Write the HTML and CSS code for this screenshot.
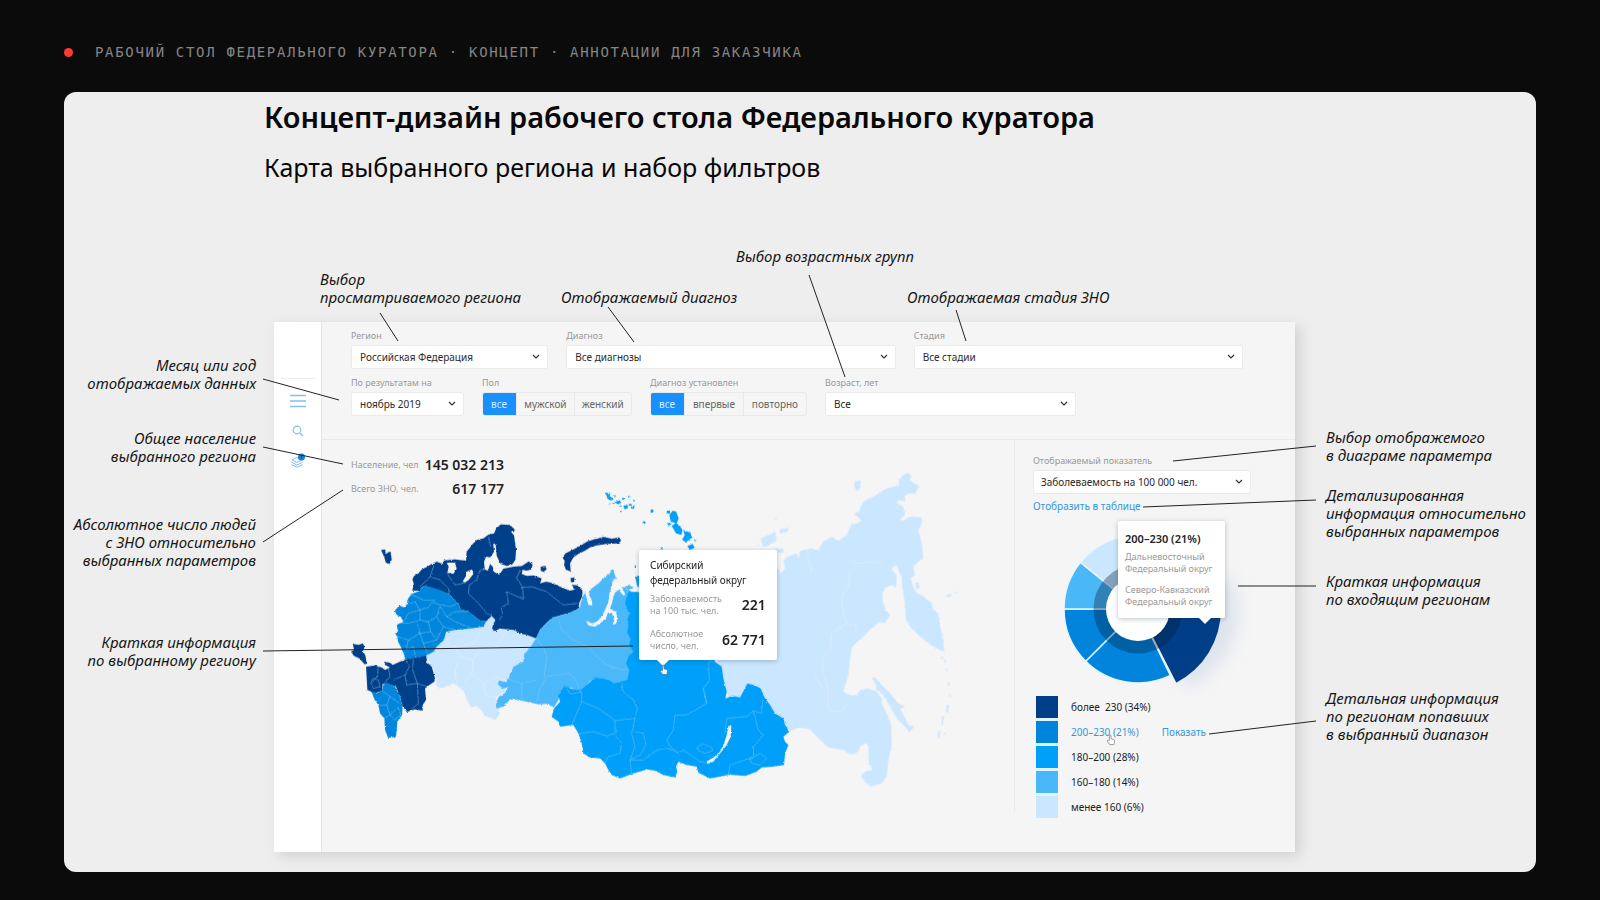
FILE: index.html
```html
<!DOCTYPE html>
<html lang="ru">
<head>
<meta charset="utf-8">
<title>Рабочий стол федерального куратора</title>
<link rel="stylesheet" href="styles.css">
</head>
<body>
<header class="topline"><span class="dot"></span><span>РАБОЧИЙ СТОЛ ФЕДЕРАЛЬНОГО КУРАТОРА · КОНЦЕПТ · АННОТАЦИИ ДЛЯ ЗАКАЗЧИКА</span></header>

<main class="slide">
  <div class="heading">
    <h1>Концепт-дизайн рабочего стола Федерального куратора</h1>
    <h2>Карта выбранного региона и набор фильтров</h2>
  </div>

  <div class="notes-top">
    <p class="note">Выбор<br>просматриваемого региона</p>
    <p class="note">Отображаемый диагноз</p>
    <p class="note raised">Выбор возрастных групп</p>
    <p class="note">Отображаемая стадия ЗНО</p>
  </div>

  <div class="stage">
    <div class="notes-left">
      <p class="note">Месяц или год<br>отображаемых данных</p>
      <p class="note">Общее население<br>выбранного региона</p>
      <p class="note">Абсолютное число людей<br>с ЗНО относительно<br>выбранных параметров</p>
      <p class="note">Краткая информация<br>по выбранному региону</p>
    </div>

    <section class="app">
      <nav class="rail">
        <button class="rail-btn" aria-label="Меню"><svg width="18" height="14" viewBox="0 0 18 14"><path d="M1 1.5H17M1 7H17M1 12.5H17" stroke-width="1.5"/></svg></button>
        <button class="rail-btn" aria-label="Поиск"><svg width="12" height="12" viewBox="0 0 12 12"><circle cx="5" cy="5" r="3.8" stroke-width="1.2"/><path d="M7.9 7.9L11 11" stroke-width="1.4"/></svg></button>
        <button class="rail-btn" aria-label="Слои"><svg width="16" height="16" viewBox="0 0 16 16"><path d="M2 7L7 4.500L12 7L7 9.500Z M1.500 9.300L7 12L12.500 9.300 M1.500 11.600L7 14.300L12.500 11.600"/><circle class="badge" cx="11.500" cy="4" r="3.500"/><path class="badge-mark" d="M11.500 2.500V5.500"/></svg></button>
      </nav>

      <div class="work">
        <form class="filters">
          <div class="row">
            <label class="field grow-s"><span>Регион</span><select><option>Российская Федерация</option></select></label>
            <label class="field grow-l"><span>Диагноз</span><select><option>Все диагнозы</option></select></label>
            <label class="field grow-l"><span>Стадия</span><select><option>Все стадии</option></select></label>
          </div>
          <div class="row">
            <label class="field month"><span>По результатам на</span><select><option>ноябрь 2019</option></select></label>
            <div class="field" role="group" aria-label="Пол"><span>Пол</span>
              <div class="seg sex"><button type="button" class="on">все</button><button type="button">мужской</button><button type="button">женский</button></div></div>
            <div class="field" role="group" aria-label="Диагноз установлен"><span>Диагноз установлен</span>
              <div class="seg when"><button type="button" class="on">все</button><button type="button">впервые</button><button type="button">повторно</button></div></div>
            <label class="field age"><span>Возраст, лет</span><select><option>Все</option></select></label>
          </div>
        </form>

        <div class="content">
          <div class="map-area">
            <dl class="totals">
              <dt>Население, чел</dt><dd>145 032 213</dd>
              <dt>Всего ЗНО, чел.</dt><dd>617 177</dd>
            </dl>

            <svg class="map" viewBox="0 0 1980 1000" role="img" aria-label="Карта России по федеральным округам">
              <defs>
                <filter id="coast" x="-2%" y="-2%" width="104%" height="104%">
                  <feTurbulence type="fractalNoise" baseFrequency="0.12" numOctaves="2" seed="4"/>
                  <feDisplacementMap in="SourceGraphic" scale="7" xChannelSelector="R" yChannelSelector="G"/>
                </filter>
              </defs>
              <g filter="url(#coast)">
                <g class="c1" transform="translate(1200 -30)">
                  <path d="M100 350L115 322L122 342L135 325L130 303L142 290L170 280L175 293L180 273L215 265L235 271L250 245L275 230L295 243L320 225L335 190L348 192L365 182L342 162L355 155L370 125L400 110L440 85L470 78L478 75L476 60L490 45L505 38L514 50L508 60L530 75L538 80L525 100L500 102L494 110L496 125L478 120L470 128L490 140L494 165L480 178L490 182L508 170L545 172L547 185L535 210L545 250L550 295L535 305L520 320L525 345L512 355L520 380L530 400L545 405L575 430L580 450L595 460L600 500L608 530L613 577L580 560L540 530L510 500L498 480L495 430L487 385L485 350L472 322L460 318L456 330L470 345L468 382L455 375L435 385L427 400L430 430L440 455L450 465L435 490L420 485L395 505L370 530L335 560L330 600L325 645L310 695L330 705L350 708L360 690L385 685L410 695L425 715L425 730L440 760L453 790L455 860L445 900L440 950L425 970L390 980L362 950L375 935L395 930L385 900L385 860L378 848L360 860L355 875L335 885L310 870L265 862L240 840L210 808L180 803L150 812L130 800L20 780L-50 690L-70 590L-70 400Z"/>
                  <path d="M393 650L405 652L425 675L455 705L475 730L497 740L480 745L490 765L505 795L522 800L508 818L495 800L470 775L450 740L430 705L410 690L408 675Z"/>
                  <path d="M345 62L362 62L360 85L350 95L342 78ZM62 235L85 225L105 215L110 240L80 260L68 258ZM118 208L148 203L142 215L120 220ZM105 265L132 265L130 278L110 278ZM526 370L536 368L538 385L528 388ZM615 408L632 402L636 408L622 412ZM640 398L650 394L648 400ZM105 175h5v4h-5ZM602 592L610 588L608 600ZM612 598L618 600L616 614ZM618 626h5v7h-5ZM624 668h5v8h-5ZM626 702h6v8h-6ZM620 735L627 733L624 758L618 756ZM606 770L612 766L608 795L604 796ZM594 815L600 812L598 832L593 834ZM612 818h4v6h-4ZM50 246L58 256L56 260Z"/>
                  <path class="faint" d="M330 300L350 310L410 305L430 318M330 330L325 380L305 410L308 450L320 490L345 495L350 520M320 490L275 520L270 570L245 600L250 640L265 690L265 750L305 755L320 730M200 270L215 340M220 640L250 690"/>
                </g>
                <path class="c1" d="M318 486L345 478L400 474L430 470L436 450L455 435L468 442L466 462L458 476L462 484L500 478L530 482L545 492L588 505L575 525L550 560L548 580L520 590L505 620L500 635L480 632L474 645L490 655L500 650L495 665L470 680L465 700L475 715L478 735L468 750L450 742L435 740L425 722L408 708L392 712L380 690L372 665L355 650L340 640L315 650L298 655L287 645L290 630L280 600L270 578L256 556L280 546L290 530L312 510Z"/>
                <path class="faint" d="M312 510L345 530L360 560L345 600L350 640M345 530L400 520L430 475M360 560L400 570L420 540L470 530L500 480M400 570L395 610L430 640L440 680L470 680M430 640L470 620L500 635M395 610L370 640"/>
                <path class="c5" d="M123 240L135 238L139 252L146 246L152 246L155 270L147 283L137 277L133 262ZM217 362L221 340L217 328L222 318L235 310L245 298L262 290L272 283L290 275L308 282L312 271L345 268L378 272L380 245L398 222L410 210L430 205L445 194L462 190L468 176L482 163L510 165L524 178L522 186L512 184L522 196L528 240L526 270L516 284L500 288L482 282L470 258L467 225L460 218L460 225L462 245L450 262L438 260L432 275L434 298L444 302L450 282L458 290L462 306L478 314L490 296L520 290L546 288L566 274L578 284L574 298L560 302L548 300L545 312L560 318L580 316L605 325L600 340L618 335L640 340L660 350L690 362L705 358L695 344L712 346L728 362L726 380L718 398L715 416L690 428L655 438L636 444L618 460L600 480L588 505L560 495L545 492L520 480L480 476L462 484L456 474L466 450L455 438L438 454L420 452L385 425L362 418L355 400L340 386L325 372L300 362L270 352L250 347L240 362Z"/>
                <path class="c5" d="M668 262L676 250L700 238L720 228L742 214L762 208L790 201L815 206L838 202L843 212L836 220L800 222L770 226L750 232L735 242L715 252L700 262L690 280L692 304L678 300L672 285L674 275ZM602 290L616 288L620 298L610 306L602 302ZM692 324L704 322L702 338L692 336ZM38 520L55 525L68 520L74 530L68 542L76 556L80 580L74 583L58 565L42 558L33 545L42 540Z"/>
                <path class="hole" d="M320 278L345 278L350 296L340 312L322 308L326 290ZM378 306L396 298L400 312L386 330L374 338L368 334L378 318Z"/>
                <path class="c4" d="M164 422L178 406L192 412L200 404L204 386L215 372L240 362L250 347L275 352L305 362L325 372L342 388L355 400L362 418L385 424L420 452L438 454L430 470L395 475L345 480L318 486L312 510L290 530L280 546L258 556L245 562L215 564L195 568L192 552L182 530L174 515L172 500L165 490L174 484L170 465L178 460L190 455L182 440L170 435Z"/>
                <path class="c5" d="M78 590L105 586L125 592L135 600L150 592L135 585L132 576L150 578L158 585L178 576L195 568L215 564L245 560L258 556L262 578L275 590L285 625L283 635L268 645L255 655L258 690L248 705L248 722L225 718L200 726L188 708L180 680L168 650L145 642L128 642L126 662L105 670L82 660Z"/>
                <path class="c4" d="M94 664L110 670L126 662L130 645L140 638L165 650L178 675L188 710L186 735L172 755L168 800L144 804L135 780L133 745L120 730L115 705L104 690Z"/>
                <path class="c2" d="M588 505L600 480L636 444L690 428L718 414L726 385L735 365L740 385L745 405L757 406L755 390L745 370L755 355L775 340L795 320L812 308L810 300L820 298L822 308L830 330L845 340L850 352L866 345L880 352L900 400L900 640L862 634L840 636L820 644L805 628L765 624L748 635L725 665L710 662L695 654L672 655L655 690L642 712L620 702L595 703L560 695L530 690L510 688L490 710L470 716L467 700L475 682L495 668L505 652L488 655L474 645L476 632L500 636L508 618L520 590L550 575L552 555L575 525Z"/>
                <g transform="translate(600 0)">
                  <path class="c3" d="M255 400L260 380L272 355L297 366L300 300L420 300L520 560L525 575L545 590L550 625L560 665L556 685L578 678L600 682L612 660L622 640L645 646L662 655L672 680L690 705L705 730L730 745L735 765L748 785L730 800L735 815L745 825L735 850L732 885L700 890L665 892L650 905L615 918L570 914L540 920L510 925L475 908L470 890L440 885L415 875L408 890L412 905L405 922L370 915L345 902L320 898L275 912L240 925L215 915L205 900L195 880L180 865L150 862L130 850L125 820L115 790L100 765L60 770L55 755L35 740L42 715L60 695L55 675L75 645L90 655L110 660L125 658L145 640L165 622L205 628L220 640L262 630L268 600L258 580L265 560L280 545L268 525L272 505L262 490L265 465L262 450L268 430Z"/>
                  <path class="c3" d="M285 320L300 316V355L292 350ZM388 135L398 122L408 124L416 145L410 160L392 155ZM395 168L408 158L428 178L424 195L408 190ZM430 180L450 188L456 202L438 218L426 208L434 196ZM442 228L458 222L464 234L448 240ZM380 160L392 158L388 168ZM380 122h10v8h-10ZM332 118h8v10h-8ZM308 154h8v7h-8ZM362 232h6v6h-6ZM462 208L470 212L464 214ZM284 286h4v6h-4Z"/>
                  <path class="c3" d="M195 68L212 70L208 78L218 84L214 92L202 86L200 78ZM222 76h5v5h-5ZM226 96L238 90L244 98L232 104ZM246 84h6v5h-6ZM264 78h4v4h-4ZM250 108L262 104L264 114L254 118ZM266 102h9v5h-9ZM272 110L284 106L282 116L274 116ZM240 122h5v4h-5ZM218 98h6v4h-6ZM208 100h4v4h-4ZM280 90h4v4h-4ZM236 110L246 106L242 112Z"/>
                  <path class="hole" d="M565 768L574 768L572 800L560 825L540 850L520 875L502 882L500 874L520 862L540 845L552 820L560 795Z"/>
                  <path class="border" d="M75 645L90 672L125 665L125 695L95 765M125 695L175 715L210 740L225 752L285 745L292 715L280 690L250 665L245 640M118 790L160 785L200 798L225 790L225 752M225 795L245 820L240 850L205 860L195 880M285 745L275 790L285 830L270 870L275 912M285 785L310 790L318 825L300 855L270 870L310 870L350 840L380 835L415 848L430 840L480 875L500 878M525 575L505 575L508 630L490 655L500 700L440 735L405 735L400 780L380 810L390 830L415 848M500 700L490 655M555 790L560 745L620 740L640 722L665 730L668 690M640 722L655 780L670 795L640 830L640 860L600 875L570 885L565 914M470 830L490 822L515 832L518 842L495 850L475 842ZM630 868L660 850L680 865L660 885L635 880Z"/>
                </g>
                <path class="hole" d="M822 325L842 330L845 318L850 345L862 360L895 350L900 366L875 366L855 352L845 350L856 374L850 376L838 362L828 362L820 380L816 398L810 416L828 425L832 445L828 462L818 464L822 445L815 428L803 428L798 445L780 460L765 470L745 466L738 452L755 460L770 455L785 440L795 420L805 395L808 370L815 345Z"/>
                <path class="border" d="M446 200L452 230M282 285L270 320L300 330L325 355L328 372M270 320L240 350M320 308L345 345L378 338M435 298L420 300L410 330L388 345L385 370L415 400L440 430L456 438M478 450L488 435L484 412L505 400L500 365L550 388L548 352L530 325L540 300M548 352L575 350L620 365L670 405L715 400M585 503L610 530L620 560L612 625M590 695L600 655L622 618L690 610L710 635L722 665M655 450L665 480L700 510L745 530L770 560L810 590L862 600M500 625L545 640L590 630M545 640L545 690M200 404L225 395L240 420L205 430L190 455M240 420L265 412L275 398L305 405L330 410L355 400M240 420L240 450L205 460L178 460M240 450L265 455L290 440L300 408M265 455L272 485L240 490L232 460M240 490L205 510L172 500M205 510L198 540L220 530L228 565M272 485L290 510L250 520L240 490M250 520L262 550M290 440L310 470L345 480M310 470L290 510M300 408L320 440L345 425L385 424M320 440L345 455L395 475M210 372L250 390L285 392M115 590L112 620L98 635M145 595L150 620L132 640M195 568L208 590L195 615L160 630M220 565L218 600L232 640L235 700L215 718M195 615L200 645L232 640L262 650M100 625L115 630L120 650L100 655L92 640ZM126 662L150 680L140 705L118 705M150 680L178 700M140 705L150 735L133 745M150 735L175 712L182 735L165 750L150 735"/>
              </g>
            </svg>

            <aside class="tip region-tip">
              <h3>Сибирский<br>федеральный округ</h3>
              <dl>
                <dt>Заболеваемость<br>на 100 тыс. чел.</dt><dd>221</dd>
                <dt>Абсолютное<br>число, чел.</dt><dd>62 771</dd>
              </dl>
              <svg class="hand" viewBox="0 0 12 14"><path d="M4 8V2Q4 1 5 1T6 2V5.500L9.500 6.500Q10.500 7 10.300 8.500L9.500 12.500H4.500L1.500 8.500Q1.500 7 3 7.500Z"/></svg>
            </aside>
          </div>

          <aside class="panel">
            <label class="field metric"><span>Отображаемый показатель</span><select><option>Заболеваемость на 100 000 чел.</option></select></label>
            <a class="table-link" href="#table">Отобразить в таблице</a>
            <svg class="donut" viewBox="0 0 230 180" role="img" aria-label="Распределение регионов по диапазонам">
              <defs><filter id="soft" x="-50%" y="-50%" width="200%" height="200%"><feGaussianBlur stdDeviation="9"/></filter></defs>
              <path d="M117 101L153 172A84 84 0 0 0 197 58Z" fill="#7f9bcb" opacity="0.2" filter="url(#soft)"/>
              <g stroke="#e9f6ff" stroke-width="1.500">
                <path fill="#0084dc" d="M105 93L137.400 159.500A74 74 0 0 1 52.700 145.300Z"/>
                <path fill="#0084dc" d="M105 93L52.700 145.300A74 74 0 0 1 31 93Z"/>
                <path fill="#4ab7f8" d="M105 93L31 93A74 74 0 0 1 47.500 46.400Z"/>
                <path fill="#cbe6ff" d="M105 93L47.500 46.400A74 74 0 0 1 105 19Z"/>
              </g>
              <path fill="#003e88" d="M105 93L142.700 167A83 83 0 0 0 188 93L170 40Z"/>
              <path stroke="#e9f6ff" stroke-width="1.500" d="M105 93L142.700 167"/>
              <circle cx="105" cy="93" r="38" fill="none" stroke="#001d38" stroke-opacity="0.350" stroke-width="13"/>
              <circle cx="105" cy="93" r="32" fill="#fff"/>
            </svg>
            <ul class="legend">
              <li><i class="k5"></i>более&nbsp; 230 (34%)</li>
              <li class="active"><i class="k4"></i><a href="#range">200–230 (21%)</a><a class="show" href="#show">Показать</a>
                <svg class="hand" viewBox="0 0 12 14"><path d="M4 8V2Q4 1 5 1T6 2V5.500L9.500 6.500Q10.500 7 10.300 8.500L9.500 12.500H4.500L1.500 8.500Q1.500 7 3 7.500Z"/></svg></li>
              <li><i class="k3"></i>180–200 (28%)</li>
              <li><i class="k2"></i>160–180 (14%)</li>
              <li><i class="k1"></i>менее 160 (6%)</li>
            </ul>
            <div class="tip range-tip">
              <h3>200–230 (21%)</h3>
              <p>Дальневосточный<br>Федеральный округ</p>
              <p>Северо-Кавказский<br>Федеральный округ</p>
            </div>
          </aside>
        </div>
      </div>
    </section>

    <div class="notes-right">
      <p class="note">Выбор отображемого<br>в диаграме параметра</p>
      <p class="note">Детализированная<br>информация относительно<br>выбранных параметров</p>
      <p class="note">Краткая информация<br>по входящим регионам</p>
      <p class="note">Детальная информация<br>по регионам попавших<br>в выбранный диапазон</p>
    </div>
  </div>

  <svg class="leaders" viewBox="0 0 1472 780" preserveAspectRatio="none" aria-hidden="true">
    <path d="M316 221L334 249M544 215L570 250M745 183L781 285M892 218L902 249M199 287L275 308M199 355L279 372M199 450L279 398M199 559L569 554M1109 369L1252 354M1079 415L1252 408M1174 494H1252M1145 642L1252 629"/>
  </svg>
</main>
</body>
</html>
```
FILE: styles.css
```css
* { box-sizing: border-box; }

body {
  margin: 0;
  min-height: 100vh;
  padding: 0 64px 28px;
  display: flex;
  flex-direction: column;
  background: #0b0b0b;
  font-family: "Noto Sans", "Open Sans", sans-serif;
  color: #222;
}

h1, h2, h3, p, dl, dd, ul { margin: 0; padding: 0; }

.topline {
  height: 92px;
  padding-top: 12px;
  display: flex;
  align-items: center;
  gap: 22px;
  font: 14px "DejaVu Sans Mono", monospace;
  letter-spacing: 0.12em;
  color: #858585;
}
.dot { width: 9px; height: 9px; border-radius: 50%; background: #ff3b30; }

.slide {
  position: relative;
  flex: 1;
  display: flex;
  flex-direction: column;
  border-radius: 12px;
  background: #eee;
  overflow: hidden;
}

.heading { padding: 5px 0 0 200px; height: 155px; color: #080808; }
.heading h1 { font-size: 29px; line-height: 40px; font-weight: 650; }
.heading h2 { margin-top: 12px; font-size: 25px; line-height: 36px; font-weight: 400; }

.note {
  font-size: 15px;
  line-height: 18px;
  font-style: italic;
  white-space: nowrap;
  color: #161616;
}

.notes-top {
  height: 75px;
  padding: 0 0 16px 256px;
  display: grid;
  grid-template-columns: 241px 175px 171px 1fr;
  align-items: end;
}
.notes-top .raised { margin-bottom: 41px; }

.stage {
  flex: 1;
  display: grid;
  grid-template-columns: 192px minmax(0, 1fr) 210px;
}
.notes-left { padding-top: 34px; text-align: right; display: flex; flex-direction: column; align-items: flex-end; }
.notes-left .note:nth-child(2) { margin-top: 37px; }
.notes-left .note:nth-child(3) { margin-top: 50px; }
.notes-left .note:nth-child(4) { margin-top: 64px; }
.notes-right { padding-top: 106px; }
.notes-right .note:nth-child(2) { margin-top: 22px; }
.notes-right .note:nth-child(3) { margin-top: 32px; }
.notes-right .note:nth-child(4) { margin-top: 81px; }

.leaders { position: absolute; inset: 0; width: 100%; height: 100%; pointer-events: none; }
.leaders path { fill: none; stroke: #222; stroke-width: 1; vector-effect: non-scaling-stroke; }

.app {
  margin: 0 31px 20px 18px;
  display: flex;
  background: #f5f5f5;
  box-shadow: 5px 4px 12px rgba(90, 95, 110, 0.2);
}

.rail {
  width: 48px;
  padding-top: 56px;
  display: flex;
  flex-direction: column;
  align-items: center;
  background: #fff;
  border-right: 1px solid #e6e6e8;
}
.rail::before { content: ""; width: 36px; height: 1px; margin-bottom: 7px; background: #eee; }
.rail-btn { width: 36px; height: 30px; padding: 0; border: 0; background: none; display: grid; place-items: center; }
.rail-btn svg { fill: none; stroke: #86bfef; stroke-width: 1; }
.rail-btn .badge { fill: #1583dc; stroke: none; }
.rail-btn .badge-mark { stroke: #0a4f96; }

.work { flex: 1; min-width: 0; display: flex; flex-direction: column; }

.filters {
  padding: 8px 52px 23px 29px;
  display: flex;
  flex-direction: column;
  gap: 8px;
  border-bottom: 1px solid #e9e9e9;
}
.row { display: flex; gap: 18px; }
.field { display: flex; flex-direction: column; gap: 3px; min-width: 0; }
.field > span { font-size: 9px; line-height: 12px; color: #999; white-space: nowrap; }
.grow-s { flex: 197 1 0; }
.grow-l { flex: 329 1 0; }
.month { width: 113px; }
.age { width: 251px; }

select {
  width: 100%;
  height: 24px;
  padding: 0 24px 0 8px;
  border: 1px solid #ebebeb;
  border-radius: 2px;
  appearance: none;
  font: 10px "Noto Sans", sans-serif;
  color: #2a2a2a;
  background: #fff url("data:image/svg+xml,%3Csvg xmlns='http://www.w3.org/2000/svg' width='8' height='6' viewBox='0 0 8 6'%3E%3Cpath d='M1 1l3 3 3-3' fill='none' stroke='%23333' stroke-width='1.2'/%3E%3C/svg%3E") no-repeat right 7px center;
}

.seg { display: flex; height: 24px; border: 1px solid #e9e9e9; border-radius: 3px; overflow: hidden; }
.sex { width: 150px; }
.when { width: 157px; }
.seg button {
  flex: 1 1 auto;
  padding: 0;
  border: 0;
  border-left: 1px solid #e9e9e9;
  font: 10px "Noto Sans", sans-serif;
  color: #666;
  background: #f5f5f5;
}
.seg .on { flex: 0 0 34px; margin: -1px 0 -1px -1px; background: #1890ff; color: #d9edff; border: 0; }

.content { flex: 1; display: flex; }
.map-area { position: relative; flex: 1; min-width: 0; padding: 13px 0 0 29px; }
.totals { width: 153px; display: grid; grid-template-columns: auto 1fr; line-height: 24px; white-space: nowrap; }
.totals dt { font-size: 9px; color: #999; }
.totals dd { font-size: 14px; font-weight: 600; text-align: right; }

.map { position: absolute; left: 18px; top: 30px; width: calc(100% - 32px); }
.c1 { fill: #cbe6ff; }
.c2 { fill: #4cb8f9; }
.c3 { fill: #009ff9; }
.c4 { fill: #0086dc; }
.c5 { fill: #003f8a; }
.hole { fill: #f5f5f5; }
.border { fill: none; stroke: #8fd0f5; stroke-width: 2; stroke-opacity: 0.7; }
.faint { fill: none; stroke: #e4f2ff; stroke-width: 2; }

.tip {
  position: absolute;
  background: #fff;
  border-radius: 2px;
  box-shadow: 0 1px 5px rgba(30, 50, 80, 0.3);
}
.tip::after {
  content: "";
  position: absolute;
  top: 100%;
  border: 6px solid transparent;
  border-top-color: #fff;
  border-bottom: 0;
}
.region-tip { left: 317px; top: 110px; width: 138px; padding: 8px 15px 8px 11px; }
.region-tip::after { left: 18px; }
.region-tip h3 { font-size: 10px; line-height: 15px; font-weight: 400; white-space: nowrap; }
.region-tip dl { margin-top: 5px; display: grid; grid-template-columns: auto 1fr; row-gap: 11px; align-items: center; }
.region-tip dt { font-size: 9px; line-height: 12px; color: #999; white-space: nowrap; }
.region-tip dd { font-size: 14px; line-height: 24px; font-weight: 600; text-align: right; white-space: nowrap; }

.hand { position: absolute; width: 10px; height: 12px; fill: #eaf5ff; stroke: #4d7896; stroke-width: 1; }
.region-tip .hand { left: 20px; top: 114px; z-index: 1; }

.panel {
  position: relative;
  width: 281px;
  margin-bottom: 40px;
  padding: 15px 44px 0 18px;
  border-left: 1px solid #e9e9e9;
  font-size: 10px;
}
.metric select { height: 24px; padding-left: 7px; }
.panel a { color: #3495de; text-decoration: none; }
.table-link { display: block; margin-top: 5px; line-height: 14px; }
.donut { display: block; width: 230px; height: 180px; margin-top: 3px; }
.legend { width: 22px; margin: 0 0 -8px 3px; background: #e0f5ff; list-style: none; display: flex; flex-direction: column; gap: 3px; }
.legend li { position: relative; display: flex; align-items: center; gap: 13px; height: 22px; line-height: 16px; white-space: nowrap; color: #1c1c2a; }
.legend i { flex: none; width: 22px; height: 22px; }
.legend .show { margin-left: 10px; }
.legend .hand { left: 70px; top: 13px; stroke: #888; fill: #fff; }
.k5 { background: #003e88; }
.k4 { background: #0084dc; }
.k3 { background: #009ff8; }
.k2 { background: #4ab7f8; }
.k1 { background: #cbe6ff; }

.range-tip { left: 103px; top: 81px; width: 107px; padding: 10px 7px 10px; font-size: 9px; line-height: 12px; color: #999; white-space: nowrap; }
.range-tip::after { left: 81px; }
.range-tip h3 { font-size: 11px; line-height: 16px; font-weight: 600; color: #222; }
.range-tip p { margin-top: 4px; }
.range-tip p + p { margin-top: 9px; }
```
